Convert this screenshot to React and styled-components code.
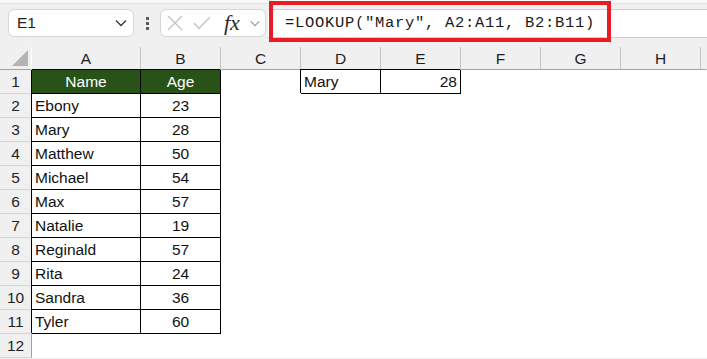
import React from "react";
import styled, { createGlobalStyle } from "styled-components";

const GlobalStyle = createGlobalStyle`
  html, body {
    margin: 0;
    padding: 0;
    background: #ffffff;
    overflow: hidden;
  }
  body {
    font-family: "Liberation Sans", Arial, sans-serif;
  }
`;

const StyledRoot = styled.div`
  width: 707px;
  height: 359px;
  display: flex;
  flex-direction: column;
  background: #f0f0f0;
`;

const TopStrip = styled.div`
  height: 3px;
  background: #f8f8f8;
  box-shadow: 0 1px 1px rgba(0, 0, 0, 0.06);
`;

const Toolbar = styled.div`
  height: 44px;
  display: flex;
  align-items: center;
  padding: 0 0 4px 8px;
  box-sizing: border-box;
`;

const NameBox = styled.div`
  width: 126px;
  height: 28px;
  box-sizing: border-box;
  background: #ffffff;
  border: 1px solid #d6d6d6;
  border-radius: 6px;
  display: flex;
  align-items: center;
  justify-content: space-between;
  padding: 0 6px 0 8px;
  font-size: 15.5px;
  color: #1f1f1f;
`;

const Dots = styled.div`
  width: 26px;
  display: flex;
  flex-direction: column;
  align-items: center;
  gap: 2px;
  span {
    width: 3px;
    height: 3px;
    background: #5a5a5a;
  }
`;

const FxBox = styled.div`
  width: 106px;
  height: 28px;
  box-sizing: border-box;
  background: #ffffff;
  border: 1px solid #d6d6d6;
  border-radius: 6px;
  display: flex;
  align-items: center;
  padding: 0 4px 0 6px;
  gap: 10px;
`;

const Fx = styled.span`
  font-family: "Liberation Serif", "Times New Roman", serif;
  font-style: italic;
  font-size: 22px;
  color: #2b2b2b;
  margin-left: 3px;
  line-height: 1;
`;

const FormulaBar = styled.div`
  position: relative;
  flex: 1;
  height: 29px;
  margin-left: 2px;
  box-sizing: border-box;
  background: #ffffff;
  border-top: 1px solid #cfcfcf;
  border-bottom: 1px solid #cfcfcf;
  display: flex;
  align-items: center;
  padding-left: 17px;
  font-family: "Liberation Mono", "Courier New", monospace;
  font-size: 15.5px;
  letter-spacing: 0.7px;
  color: #1a1a1a;
  white-space: nowrap;
`;

const Highlight = styled.div`
  position: absolute;
  left: 1px;
  top: -9px;
  width: 342px;
  height: 41px;
  box-sizing: border-box;
  border: 4px solid #e81c24;
`;

const Sheet = styled.div`
  display: grid;
  grid-template-columns: 32px 109px 80px 80px 80px 80px 80px 80px 80px 1fr;
  grid-template-rows: 23px repeat(12, 24px);
  background: #ffffff;
  font-size: 15.5px;
  color: #111111;
`;

const Corner = styled.div`
  position: relative;
  background: #f0f0f0;
  border-bottom: 1px solid #a2a2a2;
  border-right: 1px solid #ffffff;
  box-sizing: border-box;
`;

const ColHead = styled.div`
  background: #f0f0f0;
  border-bottom: 1px solid #a2a2a2;
  border-right: 1px solid ${(props) => (props.$last ? "transparent" : "#c4c4c4")};
  box-sizing: border-box;
  display: flex;
  align-items: center;
  justify-content: center;
  color: #1f1f1f;
  padding-top: 1px;
`;

const RowHead = styled.div`
  background: #f0f0f0;
  border-bottom: 1px solid #d4d4d4;
  border-right: 1px solid #a2a2a2;
  box-sizing: border-box;
  display: flex;
  align-items: center;
  justify-content: center;
  color: #1f1f1f;
  padding-top: 1px;
`;

const Cell = styled.div`
  box-sizing: border-box;
  display: flex;
  align-items: center;
  padding: 1px 3px 0 3px;
  white-space: nowrap;
  justify-content: ${(props) =>
    props.$align === "center" ? "center" : props.$align === "right" ? "flex-end" : "flex-start"};
  background: ${(props) => (props.$head ? "#295219" : "#ffffff")};
  color: ${(props) => (props.$head ? "#ffffff" : "#111111")};
  ${(props) =>
    props.$boxed &&
    `
    border-right: 1px solid #000;
    border-bottom: 1px solid #000;
    box-shadow: -1px -1px 0 #000;
  `}
`;

const columns = ["A", "B", "C", "D", "E", "F", "G", "H", ""];

const people = [
  ["Ebony", 23],
  ["Mary", 28],
  ["Matthew", 50],
  ["Michael", 54],
  ["Max", 57],
  ["Natalie", 19],
  ["Reginald", 57],
  ["Rita", 24],
  ["Sandra", 36],
  ["Tyler", 60],
];

function Chevron({ size = 12, color = "#444" }) {
  return (
    <svg width={size} height={size / 2 + 2} viewBox="0 0 12 8">
      <polyline points="1,1.5 6,6.5 11,1.5" fill="none" stroke={color} strokeWidth="1.4" />
    </svg>
  );
}

function Row({ n, cells }) {
  return (
    <>
      <RowHead>{n}</RowHead>
      {cells.map((c, i) => (
        <Cell key={i} $boxed={c.boxed} $head={c.head} $align={c.align}>
          {c.text}
        </Cell>
      ))}
    </>
  );
}

function App() {
  const empty = { text: "" };
  const rows = [];
  rows.push([
    { text: "Name", head: true, boxed: true, align: "center" },
    { text: "Age", head: true, boxed: true, align: "center" },
    empty,
    { text: "Mary", boxed: true },
    { text: "28", boxed: true, align: "right" },
    empty,
    empty,
    empty,
    empty,
  ]);
  people.forEach(([name, age]) => {
    rows.push([
      { text: name, boxed: true },
      { text: String(age), boxed: true, align: "center" },
      empty,
      empty,
      empty,
      empty,
      empty,
      empty,
      empty,
    ]);
  });
  rows.push(Array(9).fill(empty));

  return (
    <>
      <GlobalStyle />
      <StyledRoot>
        <TopStrip />
        <Toolbar>
          <NameBox>
            <span>E1</span>
            <Chevron size={12} color="#3a3a3a" />
          </NameBox>
          <Dots>
            <span />
            <span />
            <span />
          </Dots>
          <FxBox>
            <svg width="16" height="16" viewBox="0 0 16 16">
              <path d="M1 1 L15 15 M15 1 L1 15" stroke="#c4c4c4" strokeWidth="1.4" fill="none" />
            </svg>
            <svg width="18" height="14" viewBox="0 0 18 14">
              <polyline points="1,7 6,12.5 17,1" stroke="#c4c4c4" strokeWidth="1.4" fill="none" />
            </svg>
            <Fx>fx</Fx>
            <Chevron size={10} color="#9a9a9a" />
          </FxBox>
          <FormulaBar>
            =LOOKUP("Mary", A2:A11, B2:B11)
            <Highlight />
          </FormulaBar>
        </Toolbar>
        <Sheet>
          <Corner>
            <svg
              width="16"
              height="16"
              viewBox="0 0 16 16"
              style={{ position: "absolute", right: 3, bottom: 3 }}
            >
              <polygon points="16,0 16,16 0,16" fill="#b4b4b4" />
            </svg>
          </Corner>
          {columns.map((c, i) => (
            <ColHead key={i} $last={i === columns.length - 1}>
              {c}
            </ColHead>
          ))}
          {rows.map((cells, i) => (
            <Row key={i} n={i + 1} cells={cells} />
          ))}
        </Sheet>
      </StyledRoot>
    </>
  );
}

export default App;
